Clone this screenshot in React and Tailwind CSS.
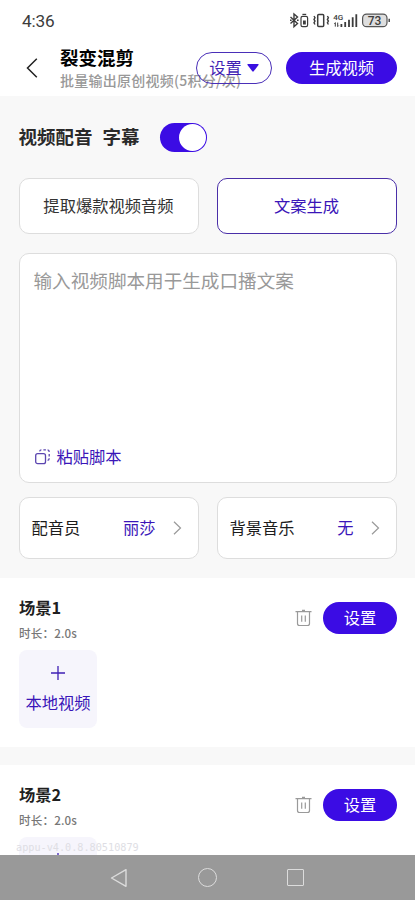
// src/App.jsx
import React from 'react';

const StatusBar = () => {
  return (
    <div className="flex h-10 items-center justify-between pl-[22px] pr-[24px] text-[#3c3c3c]">
      <span className="mt-[2px] font-[Roboto] text-[17.2px] leading-5 tracking-[-0.2px]">4:36</span>
      <svg width="102" height="20" viewBox="290 10 102 20" fill="none" stroke="#3c3c3c" strokeWidth="1.2">
        {/* bluetooth */}
        <path d="M291.5 17l7 6.5-3.5 3.2V14l3.5 3-7 6.5M291 20.2h1.6M298 20.2h1.6" strokeWidth="1.4" />
        {/* device battery */}
        <rect x="302" y="16.4" width="6.6" height="10.2" rx="1.6" />
        <path d="M303.4 14.4h3.8" />
        <path d="M304 20.5h2.8v4H304z" fill="#3c3c3c" stroke="none" />
        {/* vibrate */}
        <rect x="318.7" y="14.6" width="6" height="12" rx="1" strokeWidth="1.5" />
        <path d="M315 16l1 1.7-1 1.7 1 1.7-1 1.7 1 1.7M328.4 16l1 1.7-1 1.7 1 1.7-1 1.7 1 1.7" strokeWidth="1.4" />
        <text x="334.3" y="20.4" fontFamily="Roboto" fontSize="8" fontWeight="500" fill="#3c3c3c" stroke="none">4G</text>
        <path d="M336.3 22.6v4M338.7 22.6v4M335.3 23.7l1-1M338.7 26.6l1-1" strokeWidth="1" />
        {/* signal bars */}
        <path d="M342.4 24v3M346.2 22v5M350 19.7v7.3M353.7 17.3v9.7M357.3 14.3v12.7" strokeWidth="1.8" />
        <rect x="363.6" y="14.1" width="24.4" height="12.6" rx="4" fill="#dedede" strokeWidth="1.2" stroke="#555" />
        <path d="M390.2 18.8v3.2" strokeWidth="1.4" />
        <text x="375.6" y="24.7" textAnchor="middle" fontFamily="Roboto" fontSize="12" fontWeight="500" fill="#3c3c3c" stroke="none">73</text>
      </svg>
    </div>
  );
};

const Header = () => {
  return (
    <header className="flex h-14 items-start pl-[26px] pr-[18px]">
      <svg className="mt-[18px] shrink-0" width="12" height="20" viewBox="0 0 12 20" fill="none" stroke="#222" strokeWidth="1.5">
        <path d="M10.8 .8L1.5 10l9.3 9.2" />
      </svg>
      <div className="ml-[22px] w-[136px] whitespace-nowrap">
        <h1 className="mt-[4px] text-[18.5px] font-bold leading-[26px] text-black">裂变混剪</h1>
        <p className="text-[14px] font-medium leading-5 tracking-[0.25px] text-[#999]">批量输出原创视频(5积分/次)</p>
      </div>
      <button className="mt-3 flex h-8 w-[76px] shrink-0 items-center justify-center gap-[5px] rounded-full border-[1.5px] border-[#4a2fb8] pb-px text-[16.3px] text-[#3f1fb4]">
        设置
        <svg width="12" height="8" viewBox="0 0 12 8" fill="#3a10e0">
          <path d="M1 0h10q1 .2.5 1L6.7 7.3q-.7.7-1.4 0L.5 1Q0 .2 1 0z" />
        </svg>
      </button>
      <button className="ml-[14px] mt-3 h-8 w-[111px] shrink-0 rounded-full bg-[#3b0ce4] pb-[2px] text-[16.3px] text-white">
        生成视频
      </button>
    </header>
  );
};

const PickerCard = ({ label, value }) => {
  return (
    <div className="flex h-[62px] items-center rounded-[10px] border border-[#ddd] bg-white pl-3 pr-4 text-[16.3px]">
      <span className="pb-px text-[#1c1c1c]">{label}</span>
      <span className="ml-auto pb-px text-[#3a15b8]">{value}</span>
      <svg className="ml-[17px]" width="9" height="14" viewBox="0 0 9 14" fill="none" stroke="#999" strokeWidth="1.2">
        <path d="M1 .7L7.5 7 1 13.3" />
      </svg>
    </div>
  );
};

const Scene = ({ title }) => {
  return (
    <section className="h-[169px] bg-white pl-[19px] pr-[18px]">
      <div className="flex items-start">
        <div>
          <h2 className="mt-[17px] text-[16.3px] font-bold leading-6 text-[#1f1f1f]">{title}</h2>
          <p className="mt-[5px] text-[11.6px] font-medium leading-[18px] tracking-[0.15px] text-[#777]">时长：2.0s</p>
        </div>
        <svg className="ml-auto mr-[11px] mt-[31px]" width="17" height="18" viewBox="0 0 17 18" fill="none" stroke="#9a9a9a" strokeWidth="1.2">
          <path d="M.5 2.6h16M7 1.4h3M2.5 2.6v11.9q0 2 2 2h8q2 0 2-2V2.6M6.7 6.5v6.3M10.3 6.5v6.3" />
        </svg>
        <button className="mt-6 h-8 w-[74px] rounded-full bg-[#3b0ce4] pb-px text-[16.3px] text-white">设置</button>
      </div>
      <div className="mt-2 flex h-[78px] w-[78px] flex-col items-center rounded-lg bg-[#f6f5fc] text-[#3a15b8]">
        <svg className="mt-4" width="14" height="14" viewBox="0 0 14 14" stroke="#3f1fb4" strokeWidth="1.3">
          <path d="M0 7h14M7 0v14" />
        </svg>
        <span className="mt-[10px] whitespace-nowrap text-[16.3px] leading-6">本地视频</span>
      </div>
    </section>
  );
};

const NavBar = () => {
  return (
    <nav className="absolute inset-x-0 bottom-0 flex h-[45px] items-center bg-[#999] pl-[110px]">
      <svg width="17" height="20" viewBox="0 0 17 20" fill="none" stroke="#dcdcdc" strokeWidth="1.4" strokeLinejoin="round">
        <path d="M16 1.7v16.6L1.5 10z" />
      </svg>
      <span className="ml-[71px] h-[19px] w-[19px] rounded-full border-[1.5px] border-[#dcdcdc]" />
      <span className="ml-[70px] h-[17px] w-[17px] rounded-[1px] border-[1.5px] border-[#dcdcdc]" />
    </nav>
  );
};

const App = () => {
  return (
    <div className="relative h-[900px] w-[415px] overflow-hidden bg-[#f8f8f8] font-['Noto_Sans_CJK_SC',sans-serif]">
      <div className="bg-white">
        <StatusBar />
        <Header />
      </div>

      <main className="h-[482px] pl-[18.5px] pr-[18.5px] pt-[26px]">
        <div className="flex h-[30px] items-center">
          <span className="text-[18.5px] font-bold text-[#2a2a2a]">视频配音</span>
          <span className="ml-[10px] text-[18.5px] font-bold text-[#2a2a2a]">字幕</span>
          <span className="ml-[20px] flex h-[29px] w-[47px] items-center justify-end rounded-full bg-[#3b0ce4] pr-px">
            <span className="h-[27px] w-[27px] rounded-full bg-white" />
          </span>
        </div>

        <div className="mt-[26px] grid grid-cols-2 gap-[18px]">
          <button className="h-[56px] rounded-[10px] border border-[#ddd] bg-white pb-px text-[16.3px] text-[#333]">
            提取爆款视频音频
          </button>
          <button className="h-[56px] rounded-[10px] border-[1.5px] border-[#4a2fa8] bg-white pb-px text-[16.3px] text-[#3a15b8]">
            文案生成
          </button>
        </div>

        <div className="mt-[19px] flex h-[230px] flex-col justify-between rounded-[10px] border border-[#ddd] bg-white px-[14px] pb-[13px] pt-[12px]">
          <p className="text-[18.6px] leading-7 text-[#999]">输入视频脚本用于生成口播文案</p>
          <div className="flex items-center gap-[7px] pl-px text-[16.3px] leading-6 text-[#3a15b8]">
            <svg width="15" height="16" viewBox="0 0 15 16" fill="none" stroke="#5b45b0" strokeWidth="1.3">
              <rect x=".7" y="4.7" width="9.8" height="10" rx="2" />
              <path d="M4.6 2.4Q5 .9 6.4 .9M8.4.9h2.5M12.6.9q1.6.2 1.6 2M14.2 5v2.4M14.2 9.2q0 2-1.6 2.2" />
            </svg>
            <span className="pb-px">粘贴脚本</span>
          </div>
        </div>

        <div className="mt-[14px] grid grid-cols-2 gap-[18px]">
          <PickerCard label="配音员" value="丽莎" />
          <PickerCard label="背景音乐" value="无" />
        </div>
      </main>

      <div className="flex flex-col gap-[18px]">
        <Scene title="场景1" />
        <Scene title="场景2" />
      </div>

      <span className="absolute left-[16px] top-[840px] font-['DejaVu_Sans_Mono',monospace] text-[10.2px] leading-4 text-[#dedee4]">
        appu-v4.0.8.80510879
      </span>
      <NavBar />
    </div>
  );
};

export default App;
